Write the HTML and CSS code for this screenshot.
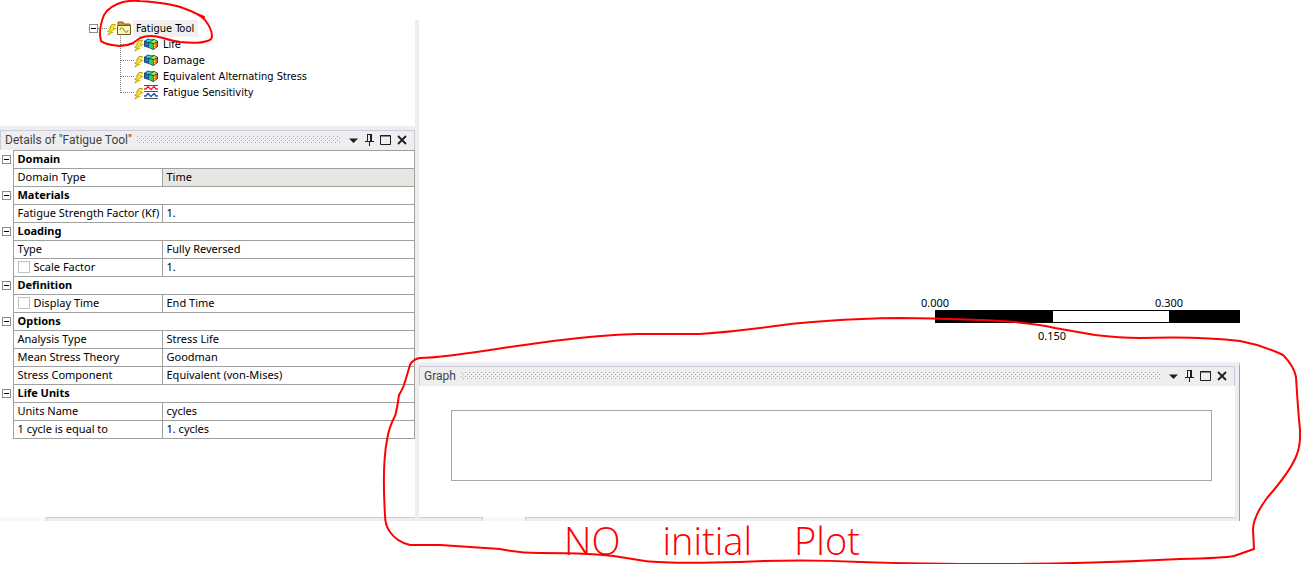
FILE: index.html
```
<!DOCTYPE html>
<html lang="en">
<head>
    <meta charset="UTF-8">
    <meta name="viewport" content="width=device-width, initial-scale=1.0">
    <title>Fatigue Tool</title>
    <link rel="stylesheet" href="styles.css">
</head>
<body>
    <!-- shared icons -->
    <svg width="0" height="0" class="sprites" aria-hidden="true">
        <symbol id="bolt" viewBox="0 0 10 12">
            <path d="M5 0h4L7 4h3L4 8h3L0 12l2-4H0l3-4H2z" fill="#c9a30c"/>
            <path d="M5.500 1H8L5.500 4.700H8L2.500 7.500H5L1.500 10.500 3.500 7.500H1.500L4.500 4H3.500z" fill="#fff02c"/>
        </symbol>
        <symbol id="folder" viewBox="0 0 14 14">
            <path d="M1 4V1h5l1 2h6v2H1z" fill="#c99a2c" stroke="#8a6410"/>
            <path d="M.5 4.500h13v9H.5z" fill="#fff6b8" stroke="#6b5a22"/>
            <path d="M3 9c0-3 3-3 4 0s4 3 4 0" fill="none" stroke="#6f7f38"/>
        </symbol>
        <symbol id="result" viewBox="0 0 14 12">
            <path d="M0 3l4-2.500 3.500 1L10 1l4 2v5.500L9.500 12 5 10 0 8.500z" fill="#1c3b3a"/>
            <path d="M.7 3.500L4.500 5v4.500L.7 8z" fill="#1c62e8"/>
            <path d="M1.300 3l3-1.800L8 2.200 5 4.300z" fill="#20d4e8"/>
            <path d="M5 5l1.500.5v4.800L5 9.500z" fill="#18c8c0"/>
            <path d="M6 4.200L10 1.800 13.300 3.300 9.500 5.300z" fill="#98ee40"/>
            <path d="M6 5l3.200 1.200V11L6 9.800z" fill="#30d060"/>
            <path d="M9.800 6l3.700-2v4.300L9.800 11z" fill="#f04818"/>
            <path d="M9.800 6l1.700-.9v4.600L9.800 11z" fill="#ffc820"/>
        </symbol>
        <symbol id="chart" viewBox="0 0 14 14">
            <path d="M0 .5h14M0 6.500h14M0 13.500h14" stroke="#555"/>
            <path d="M0 4h2l2-2.500 3 3 3-3L12 4h2" fill="none" stroke="#f0202c" stroke-width="1.300"/>
            <path d="M0 11h2l2-2.500 3 3 3-3 2 2.500h2" fill="none" stroke="#1c4fae" stroke-width="1.300"/>
        </symbol>
        <symbol id="down" viewBox="0 0 12 12"><path d="M1 4.500h9L5.500 9z" fill="#1e1e1e"/></symbol>
        <symbol id="pin" viewBox="0 0 12 12">
            <path d="M3 .5h5M3.500 0v7M1 7.500h9M5.500 8v4" stroke="#1e1e1e" fill="none"/>
            <path d="M7 0v7" stroke="#1e1e1e" stroke-width="2"/>
        </symbol>
        <symbol id="max" viewBox="0 0 12 12"><path d="M.5 1.500h10v9H.5zM0 2h11" fill="none" stroke="#1e1e1e"/></symbol>
        <symbol id="close" viewBox="0 0 12 12"><path d="M2 2l8 8M10 2l-8 8" stroke="#1e1e1e" stroke-width="1.800"/></symbol>
    </svg>

    <div class="workspace">
        <aside class="sidebar">
            <nav class="tree">
                <div class="node">
                    <button class="toggle" aria-label="Collapse Fatigue Tool"></button>
                    <span class="line"></span>
                    <svg class="bolt"><use href="#bolt"/></svg>
                    <svg class="icon"><use href="#folder"/></svg>
                    <span class="label selected">Fatigue Tool</span>
                </div>
                <ul class="children">
                    <li class="node"><span class="branch"></span><svg class="bolt"><use href="#bolt"/></svg><svg class="icon"><use href="#result"/></svg><span class="label">Life</span></li>
                    <li class="node"><span class="branch"></span><svg class="bolt"><use href="#bolt"/></svg><svg class="icon"><use href="#result"/></svg><span class="label">Damage</span></li>
                    <li class="node"><span class="branch"></span><svg class="bolt"><use href="#bolt"/></svg><svg class="icon"><use href="#result"/></svg><span class="label">Equivalent Alternating Stress</span></li>
                    <li class="node"><span class="branch"></span><svg class="bolt"><use href="#bolt"/></svg><svg class="icon"><use href="#chart"/></svg><span class="label">Fatigue Sensitivity</span></li>
                </ul>
            </nav>

            <section class="details">
                <header class="panel-header">
                    <span>Details of "Fatigue Tool"</span>
                    <span class="grip"></span>
                    <div class="tools">
                        <button aria-label="Menu"><svg><use href="#down"/></svg></button>
                        <button aria-label="Pin"><svg><use href="#pin"/></svg></button>
                        <button aria-label="Maximize"><svg><use href="#max"/></svg></button>
                        <button aria-label="Close"><svg><use href="#close"/></svg></button>
                    </div>
                </header>
                <table class="props">
                    <colgroup><col class="col-toggle"><col class="col-name"><col></colgroup>
                    <tbody>
                        <tr><td><button class="toggle" aria-label="Collapse Domain"></button></td><th colspan="2">Domain</th></tr>
                        <tr><td></td><td>Domain Type</td><td class="readonly">Time</td></tr>
                        <tr><td><button class="toggle" aria-label="Collapse Materials"></button></td><th colspan="2">Materials</th></tr>
                        <tr><td></td><td>Fatigue Strength Factor (Kf)</td><td>1.</td></tr>
                        <tr><td><button class="toggle" aria-label="Collapse Loading"></button></td><th colspan="2">Loading</th></tr>
                        <tr><td></td><td>Type</td><td>Fully Reversed</td></tr>
                        <tr><td></td><td><label><input type="checkbox">Scale Factor</label></td><td>1.</td></tr>
                        <tr><td><button class="toggle" aria-label="Collapse Definition"></button></td><th colspan="2">Definition</th></tr>
                        <tr><td></td><td><label><input type="checkbox">Display Time</label></td><td>End Time</td></tr>
                        <tr><td><button class="toggle" aria-label="Collapse Options"></button></td><th colspan="2">Options</th></tr>
                        <tr><td></td><td>Analysis Type</td><td>Stress Life</td></tr>
                        <tr><td></td><td>Mean Stress Theory</td><td>Goodman</td></tr>
                        <tr><td></td><td>Stress Component</td><td>Equivalent (von-Mises)</td></tr>
                        <tr><td><button class="toggle" aria-label="Collapse Life Units"></button></td><th colspan="2">Life Units</th></tr>
                        <tr><td></td><td>Units Name</td><td>cycles</td></tr>
                        <tr><td></td><td>1 cycle is equal to</td><td>1. cycles</td></tr>
                    </tbody>
                </table>
                <div class="tabs"><span class="tab"></span><span class="rest"></span></div>
            </section>
        </aside>

        <main class="viewport">
            <div class="scene">
                <div class="ruler">
                    <div class="ticks"><span>0.000</span><span>0.300</span></div>
                    <div class="bar"><i></i></div>
                    <div class="mid">0.150</div>
                </div>
            </div>
            <section class="graph">
                <div class="graph-body">
                    <header class="panel-header">
                        <span>Graph</span>
                        <span class="grip"></span>
                        <div class="tools">
                            <button aria-label="Menu"><svg><use href="#down"/></svg></button>
                            <button aria-label="Pin"><svg><use href="#pin"/></svg></button>
                            <button aria-label="Maximize"><svg><use href="#max"/></svg></button>
                            <button aria-label="Close"><svg><use href="#close"/></svg></button>
                        </div>
                    </header>
                    <div class="plot"></div>
                    <div class="tabs"><span class="lead"></span><span class="tab"></span><span class="rest"></span></div>
                </div>
            </section>
        </main>
    </div>
    <p class="note"><span>NO</span> <span>initial</span> <span>Plot</span></p>

    <!-- red pen marks -->
    <svg class="ink" width="1301" height="564" viewBox="0 0 1301 564" aria-hidden="true">
        <path d="M101 41Q98 30 104 15Q109 6 123 2Q132 0 140 1Q170 3 183 8Q200 14 205 20Q212 29 212 36Q212 40 207 41Q199 44 180 42Q173 41 163 38Q150 34 140 38L133 43Q127 46 120 46Q106 45 101 41M197 14L204 17"/>
        <path d="M420 358Q440 358 503 348L553 341Q600 335 637 334H700Q730 332 760 328Q820 319 900 318Q970 319 1000 321Q1035 323 1055 328L1095 335Q1120 338 1140 338Q1200 336 1240 341Q1262 345 1283 355Q1294 366 1296 377Q1298 410 1300 430Q1301 447 1295 459Q1288 474 1267 498Q1253 517 1253 530L1254 549L1234 556Q1225 558 1180 559Q1080 564 1000 564Q920 564 860 562Q800 559 740 562Q670 564 645 561L620 557Q595 553 540 553Q520 553 500 549L440 545H410Q397 542 390 532Q385 525 385 515Q382 466 387 440Q389 427 395 416Q397 410 399 395Q403 388 404 385L410 365Q413 359 420 358"/>
    </svg>
</body>
</html>
```
FILE: styles.css
```
* {
    box-sizing: border-box;
}
body {
    margin: 0;
    position: relative;
    min-height: 100vh;
    background: #fff;
    color: #000;
    font-family: "Noto Sans", "Open Sans", sans-serif;
    font-size: 11px;
    overflow: hidden;
}
button {
    padding: 0;
    border: 0;
    background: none;
}
.sprites {
    position: absolute;
}
.workspace {
    display: flex;
    padding-top: 20px;
    padding-right: 61px;
}
.sidebar {
    width: 419px;
    flex: none;
    border-right: 4px solid #eeeef0;
}

/* tree */
.tree {
    height: 106px;
    padding-left: 89px;
    font-family: "DejaVu Sans Condensed", "DejaVu Sans", sans-serif;
}
.node {
    display: flex;
    align-items: center;
    height: 16px;
}
.toggle {
    display: block;
    flex: none;
    width: 9px;
    height: 9px;
    border: 1px solid #8c8c8c;
    background: linear-gradient(#000, #000) center / 5px 1px no-repeat #fff;
}
.line {
    width: 9px;
    border-top: 1px dotted #808080;
}
.bolt {
    width: 10px;
    height: 12px;
    align-self: flex-end;
}
.icon {
    width: 14px;
    height: 14px;
}
.label {
    padding: 1px 4px 0 5px;
    line-height: 16px;
    white-space: nowrap;
}
.selected {
    padding-left: 3px;
    margin-left: 2px;
    background: #f0f0f0;
}
.children {
    list-style: none;
    margin: 0 0 0 31px;
    padding: 0;
}
.children .node:not(:last-child) {
    background: repeating-linear-gradient(#808080 0 1px, transparent 1px 2px) left / 1px 100% no-repeat;
}
.branch {
    align-self: flex-start;
    width: 14px;
    height: 9px;
    border-left: 1px dotted #808080;
    border-bottom: 1px dotted #808080;
}

/* docked panels */
.details {
    display: flex;
    flex-direction: column;
    min-height: 395px;
    border-top: 4px solid #eeeef0;
}
.panel-header {
    display: flex;
    align-items: center;
    gap: 5px;
    height: 20px;
    padding: 0 4px 2px;
    border: 1px solid #cbcbdc;
    border-bottom: 0;
    background: #eeeef0;
    color: #444;
    font-family: Roboto, sans-serif;
    font-size: 12px;
    line-height: 16px;
    white-space: nowrap;
}
.grip {
    flex: 1;
    height: 7px;
    background-image:
        conic-gradient(from 270deg at 1px 1px, #a8a8a8 90deg, transparent 0),
        conic-gradient(from 270deg at 1px 1px, #a8a8a8 90deg, transparent 0);
    background-size: 4px 4px;
    background-position: 0 0, 2px 2px;
}
.tools {
    display: flex;
}
.tools button {
    width: 16px;
    height: 16px;
}
.tools svg {
    display: block;
    width: 12px;
    height: 12px;
    margin: 2px;
}
.props {
    width: 100%;
    table-layout: fixed;
    border-collapse: collapse;
}
.col-toggle {
    width: 13px;
}
.col-name {
    width: 149px;
}
.props td,
.props th {
    height: 18px;
    padding: 0 0 2px 4px;
    border: 1px solid #a0a0a0;
    line-height: 14px;
    text-align: left;
    white-space: nowrap;
}
.props td:first-child {
    padding: 0 2px;
    border-width: 0 1px 0 0;
}
.props .readonly {
    background: #e7e6e3;
}
.props label {
    display: flex;
    align-items: center;
    gap: 4px;
}
.props input {
    appearance: none;
    width: 12px;
    height: 12px;
    margin: 0;
    border: 1px solid #c0c0c0;
    background: #fff;
}
.tabs {
    display: flex;
    height: 4px;
    margin-top: auto;
}
.tab {
    width: 46px;
    background: #f7f7f7;
}
.graph .tab {
    width: 42px;
}
.lead,
.rest {
    border-top: 1px solid #cbcbdc;
    background: #eeeef0;
}
.rest {
    flex: 1;
    border-left: 1px solid #cbcbdc;
}
.lead {
    width: 64px;
    border-right: 1px solid #cbcbdc;
}

/* 3D view */
.viewport {
    flex: 1;
    display: flex;
    flex-direction: column;
}
.scene {
    flex: 1;
    display: flex;
    justify-content: flex-end;
    align-items: flex-end;
    padding-bottom: 19px;
}
.ruler {
    width: 319px;
    line-height: 14px;
}
.ticks {
    display: flex;
}
.ticks span {
    flex: none;
    width: 234px;
}
.bar {
    height: 13px;
    margin: 0 0 0 14px;
    padding: 1px 71px 1px 118px;
    background: #000;
}
.bar i {
    display: block;
    height: 11px;
    background: #fff;
}
.mid {
    padding: 6px 0 0 117px;
}
.graph {
    padding-right: 4px;
    border-top: 4px solid #eeeef0;
    border-right: 1px solid #a0a0a0;
    background: #eeeef0;
}
.graph-body {
    display: flex;
    flex-direction: column;
    min-height: 155px;
    background: #fff;
}
.plot {
    height: 71px;
    margin: 24px 23px 0 32px;
    border: 1px solid #a6a6a6;
}

/* annotations */
.note {
    display: flex;
    gap: 42px;
    margin: 0;
    padding-left: 564px;
    color: #f00;
    font-family: "Open Sans", sans-serif;
    font-size: 38px;
    font-weight: 300;
    line-height: 38px;
}
.ink {
    position: absolute;
    top: 0;
    left: 0;
    fill: none;
    stroke: #f00;
    stroke-width: 2;
    stroke-linejoin: round;
    stroke-linecap: round;
    pointer-events: none;
}
```
